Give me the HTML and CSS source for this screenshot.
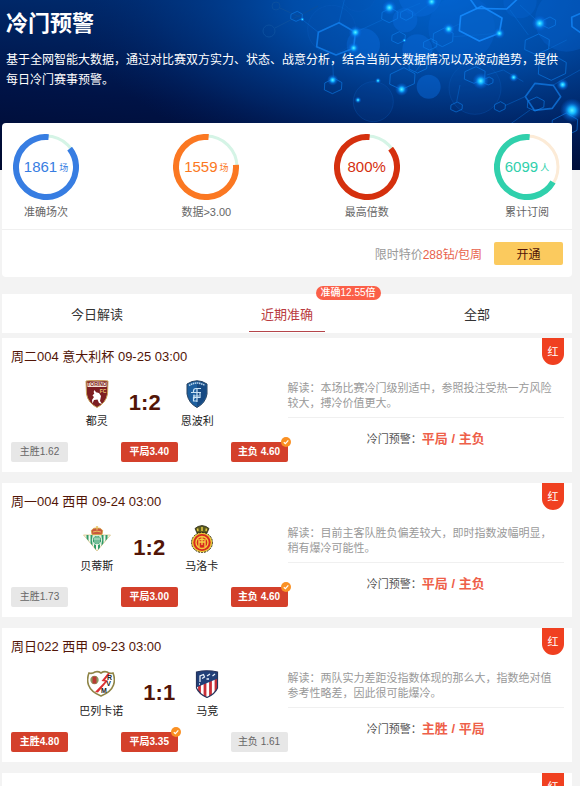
FILE: index.html
```html
<!DOCTYPE html>
<html lang="zh-CN">
<head>
<meta charset="utf-8">
<meta name="viewport" content="width=device-width, initial-scale=1">
<title>冷门预警</title>
<link rel="stylesheet" href="styles.css">
</head>
<body>
<header class="hero">
  <svg class="hero-art" viewBox="0 0 580 170" preserveAspectRatio="xMaxYMin slice" aria-hidden="true">
    <defs>
      <linearGradient id="base" x1="0" y1="1" x2="0.25" y2="0"><stop offset="0" stop-color="#000a30"/><stop offset="0.45" stop-color="#001346"/><stop offset="1" stop-color="#002a6c"/></linearGradient>
      <radialGradient id="light" gradientUnits="userSpaceOnUse" cx="0" cy="0" r="1" gradientTransform="translate(440 -5) scale(370 185)"><stop offset="0" stop-color="#0062cc"/><stop offset="0.4" stop-color="#0052b2" stop-opacity="0.85"/><stop offset="0.75" stop-color="#003a8c" stop-opacity="0.4"/><stop offset="1" stop-color="#00246c" stop-opacity="0"/></radialGradient>
      <radialGradient id="glow"><stop offset="0" stop-color="#5cf4ff"/><stop offset="0.3" stop-color="#12b4ff"/><stop offset="0.6" stop-color="#0a7cf0" stop-opacity="0.5"/><stop offset="1" stop-color="#0060e0" stop-opacity="0"/></radialGradient>
      <path id="hex" d="M-0.95 -0.4L0.1 -1L0.95 -0.45L0.9 0.45L-0.1 1L-1 0.5Z" vector-effect="non-scaling-stroke"/>
    </defs>
    <rect width="580" height="170" fill="url(#base)"/>
    <rect width="580" height="170" fill="url(#light)"/>
    <g fill="none" stroke="#0b4f9e" stroke-width="1"><circle cx="276" cy="6" r="4"/><circle cx="269" cy="31" r="6"/><path d="M275 28L318 6M280 8L302 18"/></g>
    <g transform="translate(290 0) scale(0.33333)">
      <g fill="#0868d8" fill-opacity="0.5">
        <circle cx="220" cy="135" r="50"/><circle cx="345" cy="60" r="37"/><circle cx="390" cy="-15" r="65"/><circle cx="515" cy="85" r="100" fill-opacity="0.3"/><circle cx="382" cy="148" r="45"/><circle cx="416" cy="260" r="36"/><circle cx="830" cy="60" r="95" fill-opacity="0.3"/><circle cx="690" cy="5" r="50" fill-opacity="0.3"/>
      </g>
      <g fill="#0450ae" fill-opacity="0.15" stroke="#0c5fc0" stroke-opacity="0.3" stroke-width="3"><circle cx="205" cy="-18" r="52"/><circle cx="125" cy="88" r="72"/><circle cx="250" cy="305" r="60"/><circle cx="555" cy="265" r="78"/></g>
      <g fill="none" stroke="#0d7eec" stroke-width="1" stroke-opacity="0.6">
        <use href="#hex" transform="translate(300 46) scale(25 22)"/><use href="#hex" transform="translate(350 44) scale(19 17)"/>
        <use href="#hex" transform="translate(460 112) scale(31 28)"/><use href="#hex" transform="translate(326 113) scale(21 18)"/>
        <use href="#hex" transform="translate(421 133) scale(21 17)"/><use href="#hex" transform="translate(742 133) scale(38 31)"/>
        <use href="#hex" transform="translate(778 68) scale(20 17)"/><use href="#hex" transform="translate(338 236) scale(39 33)"/>
        <use href="#hex" transform="translate(130 258) scale(27 23)"/><use href="#hex" transform="translate(555 225) scale(32 25)"/>
        <use href="#hex" transform="translate(596 243) scale(14 12)"/><use href="#hex" transform="translate(500 321) scale(18 15)"/>
        <use href="#hex" transform="translate(630 320) scale(17 15)"/><use href="#hex" transform="translate(20 49) scale(18 15)"/>
        <use href="#hex" transform="translate(738 312) scale(26 21)"/><use href="#hex" transform="translate(788 204) scale(43 37)"/>
        <use href="#hex" transform="translate(385 195) scale(28 24)"/><use href="#hex" transform="translate(825 375) scale(40 36)"/>
      </g>
      <g fill="none" stroke="#0a6fd8" stroke-opacity="0.45" stroke-width="3"><path d="M147 68L163 0M196 97L276 60M318 40L390 10M352 60L430 4M476 87L512 70M490 110L628 100M660 30L715 105M130 230L128 180M36 58L85 97M376 215L440 135M500 305L510 255M645 317L705 290M590 225L640 210L700 245M770 150L830 120M749 70L690 15M790 255L870 210M650 380L720 330"/></g>
      <g fill="none" stroke="#168cff" stroke-width="5" stroke-linejoin="round">
        <path d="M85 97L147 68L196 97L191 145L138 165L80 140Z" stroke-opacity="0.65"/><path d="M512 48L575 19L636 54L628 100L568 123L508 92Z" fill="#0664ca" fill-opacity="0.5" stroke-opacity="0.85"/>
        <path d="M532 -15L560 25L650 27L690 -10" stroke-opacity="0.8"/><path d="M706 290L735 250L790 256L812 290L787 325L733 331Z" stroke-opacity="0.6"/>
        <path d="M872 40L845 52L846 80L872 98" stroke-opacity="0.7"/>
      </g>
      <g fill="url(#glow)">
        <circle cx="196" cy="97" r="20"/><circle cx="191" cy="144" r="17"/><circle cx="298" cy="23" r="22"/><circle cx="425" cy="5" r="20"/><circle cx="476" cy="87" r="19"/><circle cx="628" cy="100" r="17"/><circle cx="749" cy="70" r="24"/><circle cx="846" cy="331" r="36"/><circle cx="572" cy="243" r="25"/><circle cx="335" cy="268" r="20"/><circle cx="128" cy="240" r="17"/><circle cx="264" cy="242" r="9"/><circle cx="204" cy="300" r="10"/><circle cx="671" cy="232" r="14"/><circle cx="818" cy="254" r="18"/><circle cx="37" cy="58" r="7"/><circle cx="343" cy="121" r="7"/>
      </g>
    </g>
  </svg>
  <h1 class="hero-title">冷门预警</h1>
  <p class="hero-text">基于全网智能大数据，通过对比赛双方实力、状态、战意分析，结合当前大数据情况以及波动趋势，提供每日冷门赛事预警。</p>
</header>
<main class="page">
  <section class="summary">
    <ul class="stats">
      <li class="stat blue">
        <div class="ring">
          <svg viewBox="0 0 66 66" aria-hidden="true"><circle class="track" cx="33" cy="33" r="31"/><circle class="arc" cx="33" cy="33" r="30" pathLength="360" stroke-dasharray="313 360" transform="rotate(-38 33 33)"/></svg>
          <span class="value">1861<small>场</small></span>
        </div>
        <span class="stat-label">准确场次</span>
      </li>
      <li class="stat orange">
        <div class="ring">
          <svg viewBox="0 0 66 66" aria-hidden="true"><circle class="track" cx="33" cy="33" r="31"/><circle class="arc" cx="33" cy="33" r="30" pathLength="360" stroke-dasharray="279 360" transform="rotate(-4 33 33)"/></svg>
          <span class="value">1559<small>场</small></span>
        </div>
        <span class="stat-label">数据&gt;3.00</span>
      </li>
      <li class="stat red">
        <div class="ring">
          <svg viewBox="0 0 66 66" aria-hidden="true"><circle class="track" cx="33" cy="33" r="31"/><circle class="arc" cx="33" cy="33" r="30" pathLength="360" stroke-dasharray="313 360" transform="rotate(-38 33 33)"/></svg>
          <span class="value">800%</span>
        </div>
        <span class="stat-label">最高倍数</span>
      </li>
      <li class="stat teal">
        <div class="ring">
          <svg viewBox="0 0 66 66" aria-hidden="true"><circle class="track" cx="33" cy="33" r="31"/><circle class="arc" cx="33" cy="33" r="30" pathLength="360" stroke-dasharray="245 360" transform="rotate(30 33 33)"/></svg>
          <span class="value">6099<small>人</small></span>
        </div>
        <span class="stat-label">累计订阅</span>
      </li>
    </ul>
    <div class="offer">
      <span class="price">限时特价<em>288钻/包周</em></span>
      <button class="buy" type="button">开通</button>
    </div>
  </section>

  <nav class="tabs">
    <button class="tab" type="button">今日解读</button>
    <button class="tab active" type="button">近期准确<span class="tip">准确12.55倍</span></button>
    <button class="tab" type="button">全部</button>
  </nav>

  <article class="match">
    <h2 class="match-title">周二004 意大利杯 09-25 03:00</h2>
    <span class="ribbon">红</span>
    <div class="match-body">
      <div class="game">
        <div class="teams">
          <div class="team">
            <svg class="crest" viewBox="0 0 24 28" aria-hidden="true">
              <path d="M1 1Q12 -0.5 23 1L22.5 14Q21 23 12 27.5Q3 23 1.5 14Z" fill="#7d1f22" stroke="#c9a35a"/>
              <path d="M2.3 2.2Q12 0.8 21.7 2.2L21.5 7H2.5Z" fill="#f5e2d4"/>
              <text x="12" y="6.4" font-size="5" font-weight="700" text-anchor="middle" fill="#7d1f22">TORINO</text>
              <text x="18" y="12.6" font-size="5" font-weight="700" text-anchor="middle" fill="#e8c070">FC</text>
              <path d="M9.5 10L11 12.2L14 13L16 16L15 21L17 24L14 23L12.5 19.5L9 20L7.5 23.5L7 20L9 17L7.5 15.5L9.3 13.6L8.6 12Z" fill="#fff"/>
            </svg>
            <span class="team-name">都灵</span>
          </div>
          <strong class="score">1:2</strong>
          <div class="team">
            <svg class="crest" viewBox="0 0 24 28" aria-hidden="true">
              <path d="M2 4Q12 -2.5 22 4V14Q20.5 23 12 27.5Q3.500 23 2 14Z" fill="#1c5f9f" stroke="#27415f"/>
              <path d="M12 1.500Q17 1.500 21 4.500V14Q20 22 12 26.500Z" fill="#174a83"/>
              <path d="M4 5.500Q12 0.500 20 5.500" fill="none" stroke="#b8d4ea" stroke-width="1.600" stroke-dasharray="1.500 0.600"/>
              <path d="M16 8.500H11Q8.500 8.500 8.500 11V12M6 12.500H16M12 9V22M8 16H14M15 12V17.500H8.500V21H12M9 14.500V19" fill="none" stroke="#c8e2f4" stroke-width="1.200"/>
            </svg>
            <span class="team-name">恩波利</span>
          </div>
        </div>
        <div class="odds">
          <span class="odd">主胜1.62</span>
          <span class="odd hot">平局3.40</span>
          <span class="odd hot">主负 4.60<svg class="check" viewBox="0 0 10 10" aria-hidden="true"><circle cx="5" cy="5" r="5"/><path d="M2.800 5.200L4.400 6.700L7.300 3.300"/></svg></span>
        </div>
      </div>
      <div class="analysis">
        <p class="note">解读：本场比赛冷门级别适中，参照投注受热一方风险较大，搏冷价值更大。</p>
        <p class="warning">冷门预警：<strong>平局 / 主负</strong></p>
      </div>
    </div>
  </article>

  <article class="match">
    <h2 class="match-title">周一004 西甲 09-24 03:00</h2>
    <span class="ribbon">红</span>
    <div class="match-body">
      <div class="game">
        <div class="teams">
          <div class="team">
            <svg class="crest wide" viewBox="0 0 28 28" aria-hidden="true">
              <clipPath id="tri"><path d="M0.500 10H27.500L24.500 13.500L14 26L3.500 13.500Z"/></clipPath>
              <path d="M0.500 10H27.500L24.500 13.500L14 26L3.500 13.500Z" fill="#f4f8ee" stroke="#d9c486" stroke-width="0.800"/>
              <path d="M4.500 9V28M8.500 9V28M19.500 9V28M23.500 9V28M12 19V28M16 19V28" stroke="#2f9b68" stroke-width="2" clip-path="url(#tri)"/>
              <circle cx="14" cy="15" r="4.700" fill="#2f9b68" stroke="#eef4e4"/>
              <path d="M12 11.500V18.500M16 11.500V18.500M10.500 14H17.500M14 11V19" stroke="#d8f0df" stroke-width="0.800"/>
              <path d="M9 9.500L8.300 5.500Q10.500 2.200 14 3.200Q17.500 2.200 19.700 5.500L19 9.500Z" fill="#c9573f" stroke="#d5a142" stroke-width="0.900"/>
              <path d="M10 7Q14 5.200 18 7M14 1V5M12.800 2H15.200" stroke="#e8bf5a" fill="none"/>
            </svg>
            <span class="team-name">贝蒂斯</span>
          </div>
          <strong class="score">1:2</strong>
          <div class="team">
            <svg class="crest" viewBox="0 0 24 28" aria-hidden="true">
              <path d="M7 8L5 3.500L8 1.500L12 0.500L16 1.500L19 3.500L17 8Z" fill="#5b5b20" stroke="#292a14" stroke-width="0.800"/>
              <path d="M8 6L7.500 3.500M12 6V2M16 6L16.500 3.500" stroke="#e3ca45" stroke-width="1.500"/>
              <ellipse cx="12" cy="17.500" rx="10.500" ry="10" fill="#ecc83a" stroke="#363018" stroke-dasharray="2 1"/>
              <ellipse cx="12" cy="17.500" rx="8.700" ry="8.500" fill="#d72a1f"/>
              <circle cx="12" cy="17.500" r="6" fill="none" stroke="#f3cc3c" stroke-width="1.400"/>
              <path d="M9 22V14M12 12V20M15 14V22M9 17H15M10 14.500H14" stroke="#f7d345" stroke-width="1.300" fill="none"/>
            </svg>
            <span class="team-name">马洛卡</span>
          </div>
        </div>
        <div class="odds">
          <span class="odd">主胜1.73</span>
          <span class="odd hot">平局3.00</span>
          <span class="odd hot">主负 4.60<svg class="check" viewBox="0 0 10 10" aria-hidden="true"><circle cx="5" cy="5" r="5"/><path d="M2.800 5.200L4.400 6.700L7.300 3.300"/></svg></span>
        </div>
      </div>
      <div class="analysis">
        <p class="note">解读：目前主客队胜负偏差较大，即时指数波幅明显，稍有爆冷可能性。</p>
        <p class="warning">冷门预警：<strong>平局 / 主负</strong></p>
      </div>
    </div>
  </article>

  <article class="match">
    <h2 class="match-title">周日022 西甲 09-23 03:00</h2>
    <span class="ribbon">红</span>
    <div class="match-body">
      <div class="game">
        <div class="teams">
          <div class="team">
            <svg class="crest wide" viewBox="0 0 28 28" aria-hidden="true">
              <path d="M2 3Q5 4 8 2Q11 1 14 3Q17 1 20 2Q23 4 26 3Q28.500 9 26.500 15Q24 22 14 26Q4 22 1.500 15Q-0.500 9 2 3Z" fill="#fff" stroke="#8f8547" stroke-width="1.600"/>
              <circle cx="7.500" cy="10" r="4.200" fill="#8a9a62"/><path d="M5.500 6.500H9.500V13.500H5.500Z" fill="#b93a33"/>
              <path d="M21 3L14.500 11L18 11.500L8 22L11 22.500L21 10.500L18 10L23 3.500Z" fill="#dc2f32"/>
              <g font-size="7" font-weight="700" fill="#222" text-anchor="middle"><text x="22.500" y="9.500">R</text><text x="21.500" y="16">V</text><text x="17" y="22.500">M</text></g>
            </svg>
            <span class="team-name">巴列卡诺</span>
          </div>
          <strong class="score">1:1</strong>
          <div class="team">
            <svg class="crest" viewBox="0 0 24 28" aria-hidden="true">
              <clipPath id="shield"><path d="M1.500 2Q12 -0.500 22.500 2V18Q20 24 12 27.500Q4 24 1.500 18Z"/></clipPath>
              <g clip-path="url(#shield)"><path d="M0 0H24V28H0Z" fill="#fff"/><path d="M4.500 0V28M10 0V28M15.500 0V28M21 0V28" stroke="#c92e37" stroke-width="2.800"/><path d="M0 0H24V8L1 17.500Z" fill="#213f78"/></g>
              <path d="M5 12V6L8.500 4.500L9.500 7L7 8.500M12 6L15 4M17.500 6L20 4M11.500 9H14M4 14H5" stroke="#e9eff8" stroke-width="1.300" fill="none"/>
              <path d="M1.500 2Q12 -0.500 22.500 2V18Q20 24 12 27.500Q4 24 1.500 18Z" fill="none" stroke="#26345d" stroke-width="1.200"/>
            </svg>
            <span class="team-name">马竞</span>
          </div>
        </div>
        <div class="odds">
          <span class="odd hot">主胜4.80</span>
          <span class="odd hot">平局3.35<svg class="check" viewBox="0 0 10 10" aria-hidden="true"><circle cx="5" cy="5" r="5"/><path d="M2.800 5.200L4.400 6.700L7.300 3.300"/></svg></span>
          <span class="odd">主负 1.61</span>
        </div>
      </div>
      <div class="analysis">
        <p class="note">解读：两队实力差距没指数体现的那么大，指数绝对值参考性略差，因此很可能爆冷。</p>
        <p class="warning">冷门预警：<strong>主胜 / 平局</strong></p>
      </div>
    </div>
  </article>

  <article class="match">
    <span class="ribbon">红</span>
  </article>
</main>
</body>
</html>
```

FILE: styles.css
```css
* {
  box-sizing: border-box;
}

body {
  margin: 0;
  height: 100vh;
  overflow: hidden;
  background: #f3f3f3;
  color: #333;
  font-family: "Liberation Sans", "Noto Sans CJK SC", sans-serif;
  font-size: 12px;
}

h1, h2, p, ul {
  margin: 0;
  padding: 0;
}

button {
  font-family: inherit;
  border: 0;
  padding: 0;
  cursor: pointer;
}

.hero {
  position: relative;
  min-height: 170px;
  padding: 8px 12px 0 6px;
  color: #fff;
  background: #00103c;
}

.hero-art {
  position: absolute;
  inset: 0;
  width: 100%;
  height: 100%;
}

.hero-title {
  position: relative;
  font-size: 22px;
  line-height: 32px;
}

.hero-text {
  position: relative;
  margin-top: 10px;
  line-height: 20px;
}

.page {
  position: relative;
  margin: -47px 8px 0 2px;
}

.summary {
  background: #fff;
  border-radius: 4px;
}

.stats {
  display: flex;
  justify-content: space-between;
  list-style: none;
  padding: 11px 12px 4px 11px;
  border-bottom: 1px solid #f0f0f0;
}

.stat {
  display: flex;
  flex-direction: column;
  align-items: center;
  width: 66px;
}

.ring {
  display: grid;
  place-items: center;
  height: 66px;
}

.ring svg,
.value {
  grid-area: 1 / 1;
}

.ring svg {
  width: 66px;
  height: 66px;
}

.ring circle {
  fill: none;
}

.track {
  stroke: #d5f4e6;
  stroke-width: 3;
}

.arc {
  stroke: currentColor;
  stroke-width: 6;
}

.value {
  font-size: 15px;
  line-height: 20px;
  white-space: nowrap;
}

.value small {
  margin-left: 2px;
  font-size: 9px;
  vertical-align: 1px;
}

.blue { color: #377de2; }
.orange { color: #fb7822; }
.red { color: #d5300e; }
.teal { color: #30d0ac; }
.teal .track { stroke: #fcebd7; }

.stat-label {
  color: #666;
  font-size: 11px;
  line-height: 25px;
  white-space: nowrap;
}

.offer {
  display: flex;
  align-items: center;
  justify-content: flex-end;
  gap: 12px;
  padding: 12px 9px;
}

.price {
  color: #999;
}

.price em {
  color: #e8624c;
  font-style: normal;
}

.buy {
  width: 69px;
  height: 23px;
  border-radius: 2px;
  background: #fbca5e;
  color: #521507;
  font-size: 12px;
}

.tabs {
  display: grid;
  grid-template-columns: repeat(3, 1fr);
  margin: 17px 0 5px;
  background: #fff;
}

.tab {
  position: relative;
  height: 39px;
  background: none;
  color: #333;
  font-size: 13px;
}

.tab.active {
  color: #b93b40;
}

.tab.active::after {
  content: "";
  position: absolute;
  left: 30%;
  right: 30%;
  bottom: 1px;
  height: 1px;
  background: #b5454a;
}

.tip {
  position: absolute;
  left: 65%;
  top: -8px;
  padding: 0 5px;
  border-radius: 7px;
  background: #fb5f48;
  color: #fff;
  font-size: 10px;
  font-weight: 500;
  line-height: 14px;
  white-space: nowrap;
}

.match {
  position: relative;
  min-height: 28px;
  margin-bottom: 11px;
  padding: 0 8px 10px 9px;
  background: #fff;
}

.match-title {
  color: #521507;
  font-size: 13px;
  font-weight: 400;
  line-height: 38px;
}

.ribbon {
  position: absolute;
  top: 0;
  right: 8px;
  width: 22px;
  height: 27px;
  border-radius: 0 0 11px 11px;
  background: #f04020;
  color: #fff;
  font-size: 11px;
  line-height: 29px;
  text-align: center;
}

.match-body {
  display: grid;
  grid-template-columns: 1fr 1fr;
}

.teams {
  display: flex;
  justify-content: center;
  align-items: center;
  gap: 20px;
  height: 62px;
}

.team {
  display: flex;
  flex-direction: column;
  align-items: center;
}

.crest {
  width: 24px;
  height: 28px;
}

.crest.wide {
  width: 28px;
}

.team-name {
  color: #222;
  font-size: 11px;
  line-height: 26px;
}

.score {
  padding-bottom: 8px;
  color: #521507;
  font-size: 22px;
  line-height: 24px;
}

.odds {
  display: flex;
  justify-content: space-between;
  margin-top: 4px;
}

.odd {
  position: relative;
  width: 57px;
  height: 20px;
  border-radius: 2px;
  background: #e7e7e7;
  color: #666;
  font-size: 10px;
  line-height: 20px;
  text-align: center;
  white-space: nowrap;
}

.odd.hot {
  background: #d4402b;
  color: #fff;
  font-weight: 700;
}

.check {
  position: absolute;
  top: -5px;
  right: -3px;
  width: 10px;
  height: 10px;
}

.check circle {
  fill: #fa9124;
}

.check path {
  fill: none;
  stroke: #fff;
  stroke-width: 1.2;
}

.analysis {
  padding-top: 5px;
}

.note {
  padding: 0 4px 6px 0;
  border-bottom: 1px solid #f0f0f0;
  color: #999;
  font-size: 11px;
  line-height: 15px;
}

.warning {
  color: #555;
  font-size: 11px;
  line-height: 42px;
  text-align: center;
}

.warning strong {
  color: #ee6049;
  font-size: 13px;
}
```
